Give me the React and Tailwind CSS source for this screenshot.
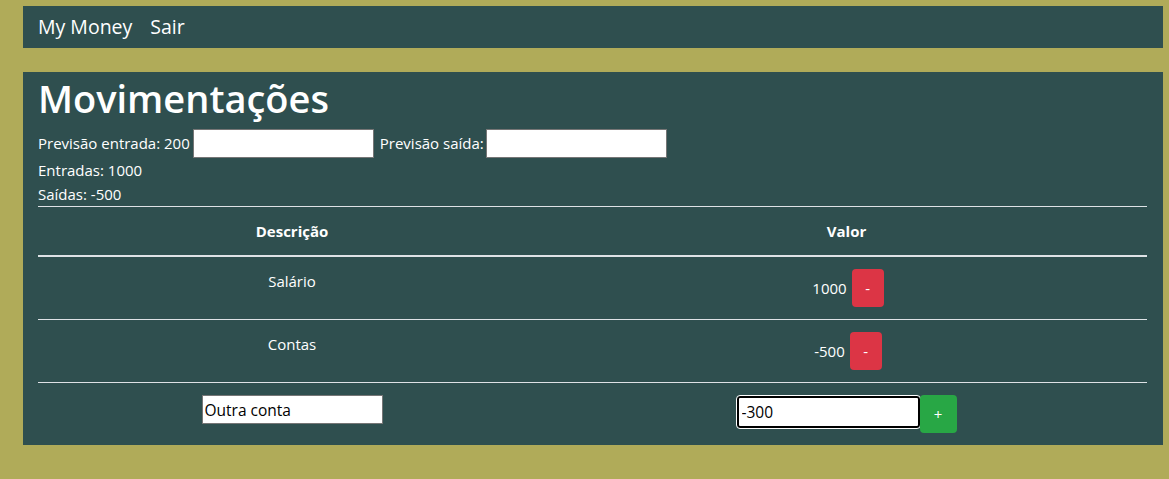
export default function App() {
  const font = { fontFamily: '"Open Sans", "Noto Sans", sans-serif' };
  return (
    <div className="min-h-[479px] bg-[#b0ab59] pt-[6px] pl-[23px] pr-[6px] text-white" style={font}>
      <nav className="h-[42px] bg-[#2f4f4f] flex items-center pl-[15px] gap-[18px] text-[19.5px]">
        <span>My Money</span>
        <span>Sair</span>
      </nav>
      <main className="mt-[24px] bg-[#2f4f4f] pl-[15px] pr-[16px] pb-[12px] text-[15px]">
        <h1 className="text-[38px] font-semibold leading-[48px] pt-[2px] mb-[6px]">Movimentações</h1>
        <div className="flex items-center h-[30px]">
          <span>Previsão entrada: 200</span>
          <input className="ml-[3px] w-[181px] h-[29px] bg-white border border-[#767676] text-black px-[2px]" />
          <span className="ml-[6px]">Previsão saída:</span>
          <input className="ml-[2px] w-[181px] h-[29px] bg-white border border-[#767676] text-black px-[2px]" />
        </div>
        <div className="leading-[24px]">Entradas: 1000</div>
        <div className="leading-[24px]">Saídas: -500</div>
        <table className="w-full border-collapse">
          <thead>
            <tr className="border-t border-[#dee2e6] border-b-2">
              <th className="w-[508px] py-[12px] leading-[24px] font-bold text-center">Descrição</th>
              <th className="py-[12px] leading-[24px] font-bold text-center">Valor</th>
            </tr>
          </thead>
          <tbody>
            {[
              ['Salário', '1000'],
              ['Contas', '-500'],
            ].map(([d, v]) => (
              <tr key={d} className="border-b border-[#dee2e6]">
                <td className="py-[12px] align-top text-center leading-[24px]">{d}</td>
                <td className="py-[12px]">
                  <div className="flex items-center justify-center gap-[5px] pl-[3px]">
                    <span className="pt-[1px]">{v}</span>
                    <button className="w-[32px] h-[38px] rounded-[4px] bg-[#dc3545] text-white text-[15px] leading-none">-</button>
                  </div>
                </td>
              </tr>
            ))}
            <tr>
              <td className="pt-[12px] text-center align-top">
                <input
                  defaultValue="Outra conta"
                  className="w-[181px] h-[29px] bg-white border border-[#767676] text-black px-[2px] text-[15.5px]"
                />
              </td>
              <td className="pt-[12px]">
                <div className="flex items-start justify-center">
                  <input
                    defaultValue="-300"
                    className="mt-[1px] w-[183px] h-[32px] bg-white border-2 border-black rounded-[3px] outline outline-1 outline-white text-black px-[3px] text-[15.5px]"
                  />
                  <button className="w-[37px] h-[38px] rounded-[4px] bg-[#28a745] text-white text-[15px] leading-none">+</button>
                </div>
              </td>
            </tr>
          </tbody>
        </table>
      </main>
    </div>
  );
}
